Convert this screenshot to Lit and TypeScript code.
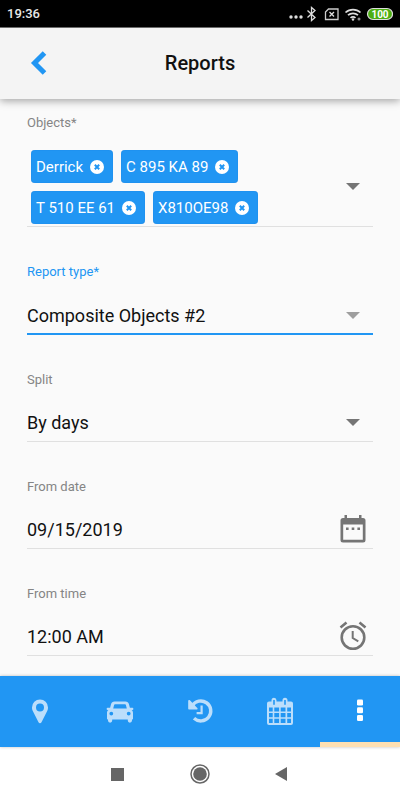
import { LitElement, html, css, svg } from "lit";
import { customElement, state } from "lit/decorators.js";

const removeIcon = html`<svg viewBox="0 0 14 14" width="14" height="14" aria-hidden="true">
  <circle cx="7" cy="7" r="7" fill="#fff" />
  <path d="M4.8 4.8l4.4 4.4M9.2 4.8l-4.4 4.4" stroke="#2196f3" stroke-width="2" />
</svg>`;

const caret = html`<svg class="caret" viewBox="0 0 40 24" width="40" height="24" aria-hidden="true">
  <path d="M13 9h14l-7 7z" fill="currentColor" />
</svg>`;

const calendarIcon = html`<svg viewBox="0 0 28 30" width="28" height="30" aria-hidden="true">
  <path fill="currentColor" fill-rule="evenodd" d="M5.500 1H8v3h12V1h2.500v3H24a2.500 2.500 0 0 1 2.500 2.500V26a2.500 2.500 0 0 1-2.500 2.500H4A2.500 2.500 0 0 1 1.500 26V6.500A2.500 2.500 0 0 1 4 4h1.500zM4.200 10.500V25.800h19.600V10.500zM7 13.500h2.600v2.600H7zM12.700 13.500h2.600v2.600h-2.600zM18.400 13.500H21v2.600h-2.600z" />
</svg>`;

const alarmIcon = html`<svg viewBox="0 0 28 30" width="28" height="30" aria-hidden="true">
  <g fill="none" stroke="currentColor">
    <circle cx="14" cy="16.500" r="11.300" stroke-width="2.600" />
    <path d="M1.500 6.500l6-5M26.500 6.500l-6-5" stroke-width="2.600" />
    <path d="M13.700 10v7l5.600 3.400" stroke-width="2" />
  </g>
</svg>`;

const pin = svg`<path fill="currentColor" fill-rule="evenodd" d="M15 3.500a8 8 0 0 1 8 8c0 1.500-.3 2.500-.8 3.600L16.500 26.300a1.700 1.700 0 0 1-3 0L7.800 15.100C7.300 14 7 13 7 11.500a8 8 0 0 1 8-8zm0 4a4 4 0 1 0 0 8 4 4 0 0 0 0-8z"/>`;
const car = svg`<path fill="currentColor" fill-rule="evenodd" d="M9.500 5.500h11c1.800 0 3 1 3.400 2.600l1 3.600h2.600c.5 0 .8.300.8.800v.8c0 .5-.3.800-.8.800h-.9c.9.700 1.400 1.700 1.400 2.900v5.700c0 .4-.3.700-.7.700H27v1.200a2.100 2.100 0 0 1-4.200 0V23.400H7.200v1.200a2.100 2.100 0 0 1-4.200 0V23.400h-.3c-.4 0-.7-.3-.7-.7V17c0-1.200.5-2.200 1.400-2.900h-.9c-.5 0-.8-.3-.8-.8v-.8c0-.5.3-.8.8-.8h2.600l1-3.600C6.500 6.500 7.700 5.500 9.500 5.500zm.5 2.800c-.5 0-.8.200-.9.700L8.200 12.500h13.600L20.900 9c-.1-.5-.4-.7-.9-.7zM6.300 15.700a1.900 1.900 0 1 0 0 3.800 1.900 1.900 0 0 0 0-3.800zm17.400 0a1.900 1.900 0 1 0 0 3.800 1.900 1.900 0 0 0 0-3.800z"/>`;
const history = svg`<path fill="none" stroke="currentColor" stroke-width="3.400" d="M7.200 9.800A10 10 0 1 1 9 22.300"/><path fill="currentColor" d="M3.200 5v7.600c0 .6.400 1 1 1h7.400c.9 0 1.300-1 .7-1.700L4.900 4.300C4.300 3.700 3.200 4.100 3.200 5z"/><path fill="none" stroke="currentColor" stroke-width="2.200" d="M16.600 9.500v7.600h-5"/>`;
const calendar = svg`<path fill="currentColor" fill-rule="evenodd" d="M4 5.500h2.500V4.200a2.500 2.500 0 0 1 5 0v1.300h6V4.200a2.500 2.500 0 0 1 5 0v1.300H26A2 2 0 0 1 28 7.500V27a2 2 0 0 1-2 2H4a2 2 0 0 1-2-2V7.500a2 2 0 0 1 2-2zM8.200 4v4.700h1.600V4zM19.200 4v4.700h1.600V4zM4 11.500v4h3.700v-4zM9.300 11.500v4h4.800v-4zM15.700 11.500v4h4.800v-4zM22.200 11.500v4H26v-4zM4 17v4.300h3.700V17zM9.300 17v4.300h4.800V17zM15.700 17v4.300h4.800V17zM22.200 17v4.300H26V17zM4 22.800V27h3.700v-4.200zM9.300 22.800V27h4.800v-4.200zM15.700 22.800V27h4.800v-4.200zM22.200 22.800V27H26v-4.200z"/>`;
const more = svg`<g fill="currentColor"><rect x="12" y="3.500" width="6" height="6" rx="1.300"/><rect x="12" y="11.300" width="6" height="6" rx="1.300"/><rect x="12" y="19" width="6" height="6" rx="1.300"/></g>`;

const tabs = [
  { name: "Map", icon: pin },
  { name: "Vehicles", icon: car },
  { name: "History", icon: history },
  { name: "Calendar", icon: calendar },
  { name: "More", icon: more },
];

@customElement("app-root")
export class AppRoot extends LitElement {
  static styles = css`
    :host {
      display: flex;
      flex-direction: column;
      height: 100vh;
      background: #fafafa;
      color: #111;
      font-family: Roboto, "Liberation Sans", sans-serif;
    }
    * { box-sizing: border-box; }
    svg { display: block; }
    button, input, select {
      margin: 0;
      padding: 0;
      border: 0;
      border-radius: 0;
      outline: 0;
      background: none;
      color: inherit;
      font: inherit;
    }
    .status {
      display: flex;
      align-items: center;
      justify-content: space-between;
      flex: none;
      height: 28px;
      padding: 0 7px;
      background: #000;
      color: #e8e8e8;
      font-size: 13px;
      font-weight: 500;
      border-bottom: 1px solid #777;
    }
    .header {
      display: grid;
      grid-template-columns: 64px 1fr 64px;
      align-items: center;
      flex: none;
      height: 71px;
      padding-bottom: 2px;
      background: #f4f4f4;
      box-shadow: 0 2px 8px rgba(0, 0, 0, 0.35);
      z-index: 1;
    }
    .back { padding: 8px 16px 8px 28px; color: #2196f3; }
    h1 { margin: 0; text-align: center; font-size: 20px; font-weight: 500; color: #111; }
    .form {
      display: flex;
      flex-direction: column;
      gap: 37px;
      flex: 1;
      min-height: 0;
      overflow: hidden;
      padding: 16px 27px 0;
    }
    .field {
      display: flex;
      flex-direction: column;
      gap: 16px;
      flex: none;
      padding-bottom: 1px;
      border-bottom: 1px solid #e0e0e0;
    }
    .field.active { gap: 17px; padding-bottom: 0; border-bottom: 2px solid #2196f3; }
    .label { font-size: 13px; line-height: 16px; color: #858585; }
    .active .label { color: #2196f3; }
    .control { display: grid; grid-template-columns: 1fr 40px; align-items: center; min-height: 36px; }
    .value {
      grid-area: 1 / 1 / 2 / 2;
      width: 100%;
      height: 36px;
      font-size: 18px;
      color: #111;
      appearance: none;
    }
    .value.wide { grid-column-end: 3; }
    .caret { grid-area: 1 / 2 / 2 / 3; color: #757575; pointer-events: none; }
    .active .caret { color: #9e9e9e; }
    .picker { display: flex; justify-content: center; color: #757575; }
    .chips { display: flex; flex-wrap: wrap; gap: 8px; padding: 3px 0 1px 4px; }
    .chip {
      display: flex;
      align-items: center;
      gap: 7px;
      height: 33px;
      padding: 0 9px 0 5px;
      border-radius: 4px;
      background: #2196f3;
      box-shadow: inset 0 0 1px #1976d2;
      color: #fff;
      font-size: 15px;
    }
    .tabs { display: flex; flex: none; height: 71px; background: #2196f3; box-shadow: 0 0 3px rgba(0, 0, 0, 0.25); z-index: 1; }
    .tab {
      display: flex;
      flex: 1;
      align-items: center;
      justify-content: center;
      padding-top: 4px;
      border-bottom: 5px solid transparent;
      color: #bbdefb;
    }
    .tab.selected { color: #fff; border-bottom-color: #ffe0b2; }
    .system {
      display: flex;
      align-items: center;
      justify-content: center;
      gap: 62px;
      flex: none;
      height: 53px;
      background: #fff;
      color: #666;
    }
  `;

  @state() private objects = ["Derrick", "C 895 KA 89", "T 510 EE 61", "X810OE98"];
  @state() private tab = "More";

  private remove(name: string) {
    this.objects = this.objects.filter((o) => o !== name);
  }

  private select(id: string, label: string, value: string, active = false) {
    return html`<div class="field ${active ? "active" : ""}">
      <label class="label" for=${id}>${label}</label>
      <div class="control">
        <select class="value wide" id=${id}><option>${value}</option></select>
        ${caret}
      </div>
    </div>`;
  }

  private picker(id: string, label: string, value: string, icon: unknown) {
    return html`<div class="field">
      <label class="label" for=${id}>${label}</label>
      <div class="control">
        <input class="value" id=${id} type="text" .value=${value} />
        <button class="picker" type="button" aria-label="Choose ${label}">${icon}</button>
      </div>
    </div>`;
  }

  render() {
    return html`
      <div class="status">
        <span>19:36</span>
        <svg viewBox="0 0 106 20" width="106" height="20" aria-hidden="true">
          <g fill="#ddd"><circle cx="4" cy="13" r="1.700" /><circle cx="9" cy="13" r="1.700" /><circle cx="14" cy="13" r="1.700" /></g>
          <path d="M20.500 6.500l7.500 7-3.500 3V3.500l3.500 3-7.500 7" fill="none" stroke="#ddd" stroke-width="1.300" />
          <path d="M41.500 5H51v10.500H38.500V8z" fill="none" stroke="#ccc" stroke-width="1.300" />
          <path d="M42.500 8l4.500 4.500M47 8l-4.500 4.500" stroke="#ddd" stroke-width="1.300" />
          <g fill="none" stroke="#ddd" stroke-width="1.700">
            <path d="M58.500 8.500a11 11 0 0 1 15 0M61 11.200a7.500 7.500 0 0 1 10 0M63.500 13.800a4 4 0 0 1 5 0" />
          </g>
          <circle cx="66" cy="15.500" r="1.200" fill="#ddd" /><circle cx="72" cy="15" r="1.500" fill="#888" />
          <rect x="80.500" y="4.500" width="25" height="11" rx="5.500" fill="#4caf12" stroke="#ddd" stroke-width="1.200" />
          <text x="93" y="13.500" text-anchor="middle" font-size="10" font-weight="700" fill="#fff">100</text>
        </svg>
      </div>
      <header class="header">
        <button class="back" type="button" aria-label="Back">
          <svg viewBox="0 0 20 26" width="20" height="26"><path d="M16.500 3L6.500 13l10 10" fill="none" stroke="currentColor" stroke-width="5" /></svg>
        </button>
        <h1>Reports</h1>
      </header>
      <main class="form">
        <div class="field" role="group" aria-labelledby="objects">
          <span class="label" id="objects">Objects*</span>
          <div class="control">
            <div class="chips">
              ${this.objects.map((o) => html`<span class="chip">${o}
                <button type="button" aria-label="Remove ${o}" @click=${() => this.remove(o)}>${removeIcon}</button></span>`)}
            </div>
            <button type="button" aria-label="Choose objects">${caret}</button>
          </div>
        </div>
        ${this.select("type", "Report type*", "Composite Objects #2", true)}
        ${this.select("split", "Split", "By days")}
        ${this.picker("date", "From date", "09/15/2019", calendarIcon)}
        ${this.picker("time", "From time", "12:00 AM", alarmIcon)}
      </main>
      <nav class="tabs">
        ${tabs.map((t) => html`<button type="button" class="tab ${t.name === this.tab ? "selected" : ""}" aria-label=${t.name}
          @click=${() => (this.tab = t.name)}><svg viewBox="0 0 30 30" width="30" height="30">${t.icon}</svg></button>`)}
      </nav>
      <div class="system">
        <button type="button" aria-label="Recent apps"><svg viewBox="0 0 20 20" width="20" height="20"><rect x="3" y="4" width="13" height="13" fill="currentColor" /></svg></button>
        <button type="button" aria-label="Home"><svg viewBox="0 0 20 20" width="20" height="20"><circle cx="10" cy="10" r="9" fill="none" stroke="currentColor" stroke-width="1.500" /><circle cx="10" cy="10" r="6.800" fill="currentColor" /></svg></button>
        <button type="button" aria-label="System back"><svg viewBox="0 0 20 20" width="20" height="20"><path d="M15 3v14L3 10z" fill="currentColor" /></svg></button>
      </div>
    `;
  }
}
